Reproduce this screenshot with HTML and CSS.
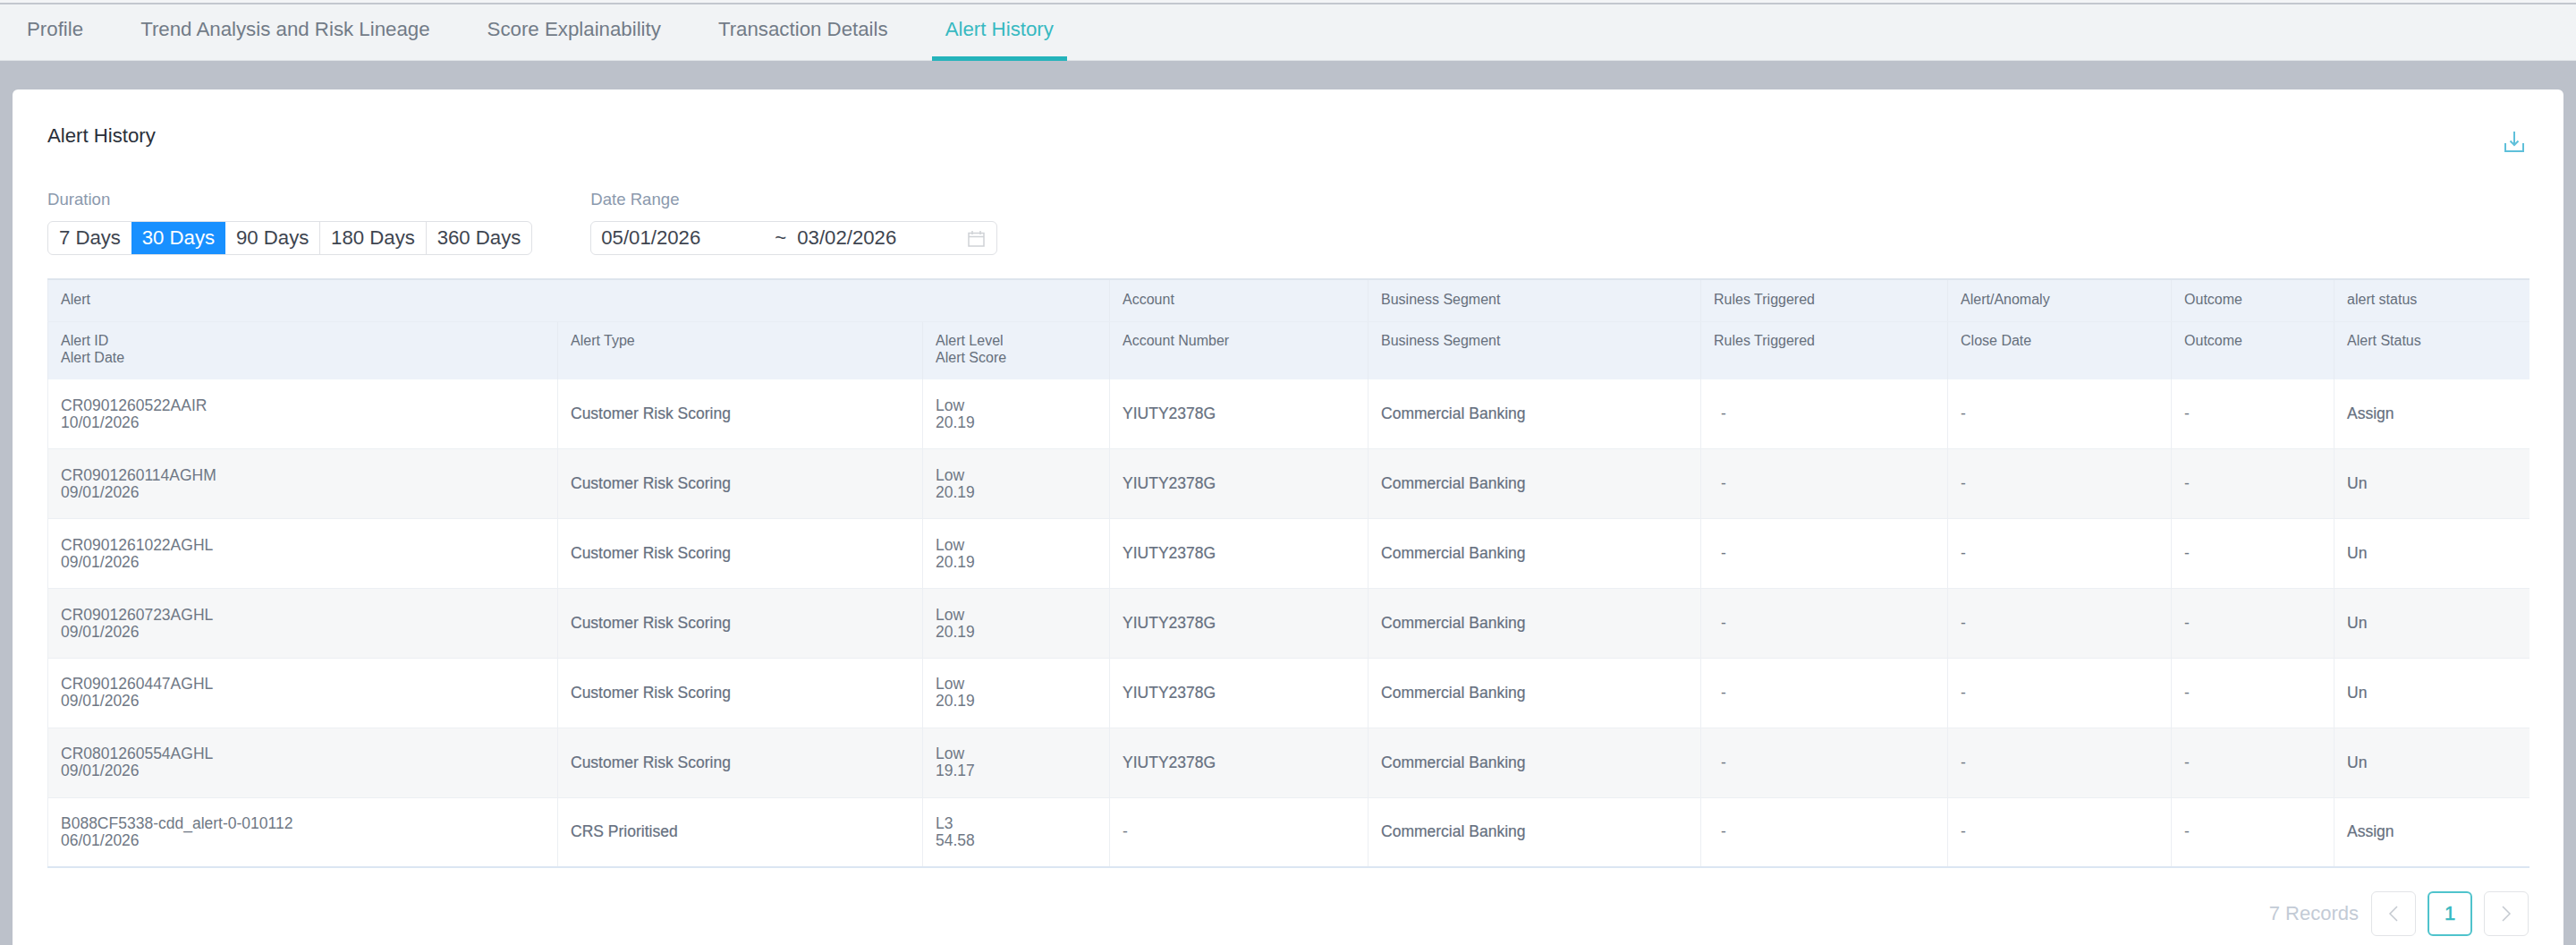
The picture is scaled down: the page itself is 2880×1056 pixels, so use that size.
FILE: index.html
```html
<!DOCTYPE html>
<html lang="en">
<head>
<meta charset="utf-8">
<title>Alert History</title>
<link rel="stylesheet" href="styles.css">
</head>
<body>
<div class="topstrip"></div>
<nav class="tabs">
  <a class="tab">Profile</a>
  <a class="tab">Trend Analysis and Risk Lineage</a>
  <a class="tab">Score Explainability</a>
  <a class="tab">Transaction Details</a>
  <a class="tab active">Alert History</a>
</nav>
<main class="main">
  <section class="card">
    <header class="card-head">
      <h2 class="title">Alert History</h2>
      <svg class="download" viewBox="0 0 22 23" width="22" height="23" aria-hidden="true">
        <path d="M11 0V14M6.500 10.500L11 15L15.500 10.500M1 13V22H21V13" fill="none" stroke="#5fc0da" stroke-width="2"/>
      </svg>
    </header>
    <div class="filters">
      <div class="field">
        <label class="label">Duration</label>
        <div class="segments">
          <span class="seg">7 Days</span>
          <span class="seg on">30 Days</span>
          <span class="seg">90 Days</span>
          <span class="seg">180 Days</span>
          <span class="seg">360 Days</span>
        </div>
      </div>
      <div class="field">
        <label class="label">Date Range</label>
        <div class="range">
          <span class="date from">05/01/2026</span>
          <span class="tilde">~</span>
          <span class="date">03/02/2026</span>
          <svg class="cal" viewBox="0 0 19 19" width="19" height="19" aria-hidden="true">
            <path d="M1 3.500H18V18H1ZM1 7.500H18M5 1V5M14 1V5" fill="none" stroke="#cfd2d6" stroke-width="1.500"/>
          </svg>
        </div>
      </div>
    </div>
    <table class="grid">
      <colgroup>
        <col class="c1"><col class="c2"><col class="c3"><col class="c4"><col class="c5"><col class="c6"><col class="c7"><col class="c8"><col class="c9">
      </colgroup>
      <thead>
        <tr class="group">
          <th colspan="3">Alert</th><th>Account</th><th>Business Segment</th><th>Rules Triggered</th><th>Alert/Anomaly</th><th>Outcome</th><th>alert status</th>
        </tr>
        <tr class="sub">
          <th>Alert ID<br>Alert Date</th><th>Alert Type</th><th>Alert Level<br>Alert Score</th><th>Account Number</th><th>Business Segment</th><th>Rules Triggered</th><th>Close Date</th><th>Outcome</th><th>Alert Status</th>
        </tr>
      </thead>
      <tbody>
        <tr><td>CR0901260522AAIR<br>10/01/2026</td><td class="m">Customer Risk Scoring</td><td>Low<br>20.19</td><td class="m">YIUTY2378G</td><td class="m">Commercial Banking</td><td class="dash">-</td><td>-</td><td>-</td><td class="m">Assign</td></tr>
        <tr><td>CR0901260114AGHM<br>09/01/2026</td><td class="m">Customer Risk Scoring</td><td>Low<br>20.19</td><td class="m">YIUTY2378G</td><td class="m">Commercial Banking</td><td class="dash">-</td><td>-</td><td>-</td><td class="m">Un</td></tr>
        <tr><td>CR0901261022AGHL<br>09/01/2026</td><td class="m">Customer Risk Scoring</td><td>Low<br>20.19</td><td class="m">YIUTY2378G</td><td class="m">Commercial Banking</td><td class="dash">-</td><td>-</td><td>-</td><td class="m">Un</td></tr>
        <tr><td>CR0901260723AGHL<br>09/01/2026</td><td class="m">Customer Risk Scoring</td><td>Low<br>20.19</td><td class="m">YIUTY2378G</td><td class="m">Commercial Banking</td><td class="dash">-</td><td>-</td><td>-</td><td class="m">Un</td></tr>
        <tr><td>CR0901260447AGHL<br>09/01/2026</td><td class="m">Customer Risk Scoring</td><td>Low<br>20.19</td><td class="m">YIUTY2378G</td><td class="m">Commercial Banking</td><td class="dash">-</td><td>-</td><td>-</td><td class="m">Un</td></tr>
        <tr><td>CR0801260554AGHL<br>09/01/2026</td><td class="m">Customer Risk Scoring</td><td>Low<br>19.17</td><td class="m">YIUTY2378G</td><td class="m">Commercial Banking</td><td class="dash">-</td><td>-</td><td>-</td><td class="m">Un</td></tr>
        <tr><td>B088CF5338-cdd_alert-0-010112<br>06/01/2026</td><td class="m">CRS Prioritised</td><td>L3<br>54.58</td><td>-</td><td class="m">Commercial Banking</td><td class="dash">-</td><td>-</td><td>-</td><td class="m">Assign</td></tr>
      </tbody>
    </table>
    <footer class="pager">
      <span class="records">7 Records</span>
      <button class="page" type="button"><svg viewBox="0 0 12 20" width="12" height="20" aria-hidden="true"><path d="M10 2L2 10L10 18" fill="none" stroke="#c4c9d0" stroke-width="1.500"/></svg></button>
      <button class="page current" type="button">1</button>
      <button class="page" type="button"><svg viewBox="0 0 12 20" width="12" height="20" aria-hidden="true"><path d="M2 2L10 10L2 18" fill="none" stroke="#c4c9d0" stroke-width="1.500"/></svg></button>
    </footer>
  </section>
</main>
</body>
</html>
```
FILE: styles.css
```css
* { box-sizing: border-box; }
html, body { margin: 0; height: 100%; overflow: hidden; }
body {
  display: flex;
  flex-direction: column;
  font-family: "Liberation Sans", Arial, sans-serif;
  background: #bcc1ca;
  color: #5e6875;
}
.topstrip { height: 5px; flex: none; background: #f3f4f6; border-bottom: 2px solid #c3c7ce; }
.tabs {
  flex: none;
  display: flex;
  gap: 34px;
  height: 63px;
  padding-left: 15px;
  background: #f1f3f5;
  border-bottom: 1px solid #e1e4e8;
}
.tab {
  display: flex;
  align-items: center;
  padding: 0 15px 6px;
  font-size: 22.28px;
  color: #727b87;
  position: relative;
}
.tab.active { color: #37b9c1; }
.tab.active::after {
  content: "";
  position: absolute;
  left: 0; right: 0; bottom: -1px;
  height: 5px;
  background: #25b3bb;
}
.main { flex: 1; min-height: 0; padding: 32px 14px 0; }
.card {
  height: 100%;
  background: #fff;
  border-radius: 6px 6px 0 0;
  padding: 37px 39px 0;
}
.card-head { display: flex; justify-content: space-between; align-items: flex-start; height: 30px; }
.title { margin: 0; font-size: 22.2px; line-height: 30px; font-weight: 400; color: #2a303a; }
.download { margin: 10px 5px 0 0; }
.filters { display: flex; gap: 65px; margin-top: 43px; }
.label { display: block; font-size: 18.6px; line-height: 26px; color: #8b99ad; margin-bottom: 11px; }
.segments {
  display: flex;
  height: 38px;
  border: 1px solid #dfe1e5;
  border-radius: 6px;
  overflow: hidden;
}
.seg {
  display: flex;
  align-items: center;
  padding: 0 11.900px;
  font-size: 22.2px;
  color: #3e4550;
  border-left: 1px solid #dfe1e5;
}
.seg:first-child { border-left: 0; }
.seg.on { background: #1890ff; color: #fff; border-left: 0; }
.seg.on + .seg { border-left: 0; }
.range {
  display: flex;
  align-items: center;
  width: 455px;
  height: 38px;
  padding: 0 13px 0 11px;
  border: 1px solid #dfe1e5;
  border-radius: 6px;
  font-size: 22.2px;
  color: #3e4550;
}
.date.from { width: 194px; }
.tilde { width: 25px; }
.cal { margin-left: auto; }
.grid {
  width: 2774px;
  margin-top: 26px;
  border-collapse: collapse;
  table-layout: fixed;
  border-left: 1px solid #e6eaf0;
  border-top: 2px solid #dde4ed;
  border-bottom: 2px solid #dbe6f2;
}
.c1 { width: 570px; } .c2 { width: 408px; } .c3 { width: 209px; } .c4 { width: 289px; }
.c5 { width: 372px; } .c6 { width: 276px; } .c7 { width: 250px; } .c8 { width: 182px; } .c9 { width: 218px; }
th {
  text-align: left;
  font-weight: 400;
  font-size: 16px;
  line-height: 19px;
  color: #666f7c;
  background: #edf2f9;
  padding: 0 14px;
  border-left: 1px solid #e6ebf2;
}
.group th { height: 47px; padding-bottom: 2px; border-bottom: 1px solid #e8edf4; }
.sub th { height: 65px; vertical-align: top; padding-top: 11px; }
td {
  height: 77.860px;
  padding: 0 14px;
  font-size: 17.500px;
  line-height: 19px;
  color: #6f7885;
  border-left: 1px solid #eceff3;
  border-top: 1px solid #eceff3;
}
td.m { color: #667080; -webkit-text-stroke: 0.2px #667080; }
td.dash { padding-left: 22px; }
tbody tr:nth-child(even) td { background: #f6f7f8; }
tbody tr:first-child td { border-top: 0; }
.pager { display: flex; align-items: center; justify-content: flex-end; width: 2774px; margin-top: 26px; }
.records { font-size: 22px; color: #c3cbd6; margin-right: 14px; }
.page {
  width: 50px;
  height: 50px;
  display: flex;
  align-items: center;
  justify-content: center;
  padding: 0;
  background: #fff;
  border: 1px solid #e2e4e7;
  border-radius: 6px;
  font: 400 22px "Liberation Sans", Arial, sans-serif;
}
.page + .page { margin-left: 13px; }
.page.current { border: 2px solid #4fc3cc; color: #37b9c1; -webkit-text-stroke: 0.5px #37b9c1; }
```
